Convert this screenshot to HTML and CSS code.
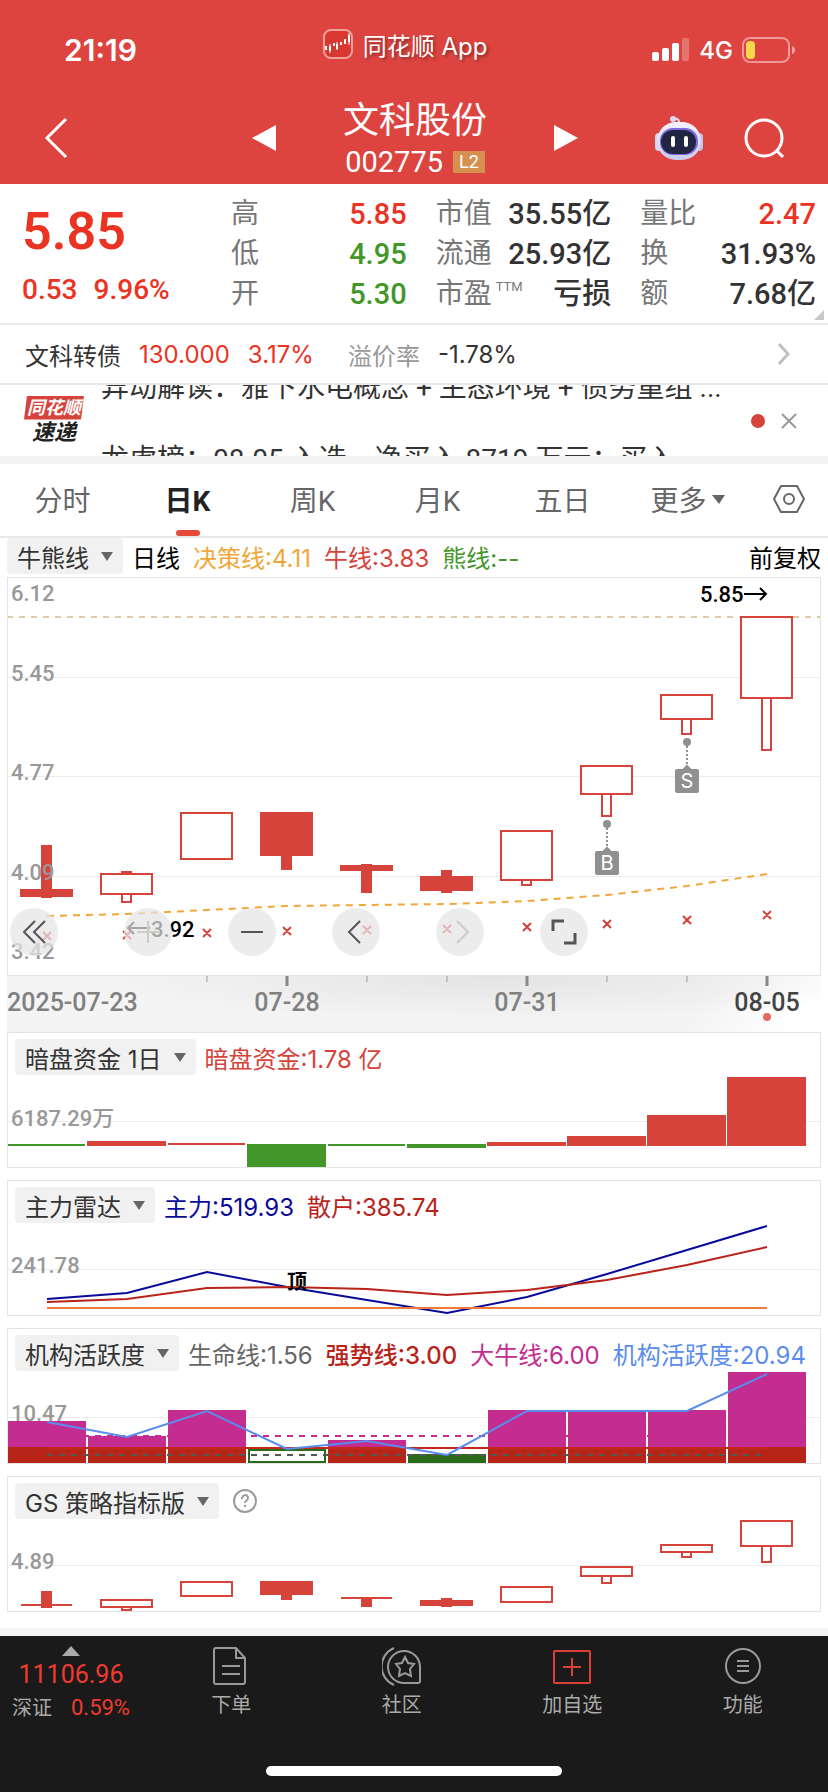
FILE: index.html
```html
<!DOCTYPE html>
<html lang="zh-CN">
<head>
  <meta charset="UTF-8">
  <meta name="viewport" content="width=device-width, initial-scale=1">
  <title>文科股份 002775</title>
  <link rel="stylesheet" href="styles.css">
</head>
<body>

  <header class="top">
    <div class="status">
      <span class="clock">21:19</span>
      <span class="app">
        <svg width="30" height="30" viewBox="0 0 30 30">
          <rect x="1" y="1" width="28" height="28" rx="7" fill="#d8382f" stroke="#f0a09c" stroke-width="2"/>
          <path d="M3 17v4M7 17v5M11 14v3M14 15v5M18 13v3M22 10v5M26 6v7" stroke="#fff" stroke-width="2" fill="none"/>
          <path d="M7 15v9M14 13v8M26 4v12" stroke="#fff" stroke-width="1" fill="none"/>
        </svg>
        同花顺 App
      </span>
      <span class="signals">
        <svg width="38" height="24" viewBox="0 0 38 24" fill="#fff">
          <rect x="0" y="14" width="7" height="9" rx="2"/>
          <rect x="10" y="10" width="7" height="13" rx="2"/>
          <rect x="20" y="5" width="7" height="18" rx="2"/>
          <rect x="30" y="0" width="7" height="23" rx="2" opacity=".25"/>
        </svg>
        4G
        <svg width="54" height="26" viewBox="0 0 54 26">
          <rect x="1" y="1" width="46" height="24" rx="7" fill="none" stroke="#fff" stroke-opacity=".45" stroke-width="2"/>
          <rect x="4" y="4" width="9" height="18" rx="4" fill="#f8d74a"/>
          <path d="M50 9q3 1 3 4t-3 4z" fill="#fff" opacity=".5"/>
        </svg>
      </span>
    </div>

    <div class="nav">
      <button class="icon-btn" aria-label="返回">
        <svg width="24" height="42" viewBox="0 0 24 42" fill="none" stroke="#fff" stroke-width="3"><path d="M22 2L3 21l19 19"/></svg>
      </button>
      <div class="switcher">
        <button class="icon-btn" aria-label="上一只">
          <svg width="24" height="26" viewBox="0 0 24 26" fill="#fff"><path d="M24 0v26L0 13z"/></svg>
        </button>
        <div class="title">
          <h1>文科股份</h1>
          <p>002775 <span class="level">L2</span></p>
        </div>
        <button class="icon-btn" aria-label="下一只">
          <svg width="24" height="26" viewBox="0 0 24 26" fill="#fff"><path d="M0 0v26l24-13z"/></svg>
        </button>
      </div>
      <div class="tools">
        <button class="icon-btn" aria-label="智能助手">
          <svg width="50" height="46" viewBox="0 0 50 46">
            <defs>
              <linearGradient id="shell" x1="0" y1="0" x2="0" y2="1">
                <stop offset="0" stop-color="#f4f2fd"/><stop offset="1" stop-color="#c9cbea"/>
              </linearGradient>
            </defs>
            <path d="M25 9c1-4-1-5-5-6" fill="none" stroke="#e6e3f8" stroke-width="2"/>
            <circle cx="19" cy="4" r="3" fill="#dcd8f4"/>
            <rect x="1" y="18" width="8" height="18" rx="4" fill="#d5d6f0"/>
            <rect x="41" y="18" width="8" height="18" rx="4" fill="#bfc4ec"/>
            <rect x="3" y="7" width="44" height="38" rx="19" fill="url(#shell)"/>
            <rect x="6" y="13" width="38" height="27" rx="13" fill="#7d68dc"/>
            <rect x="7" y="15" width="35" height="24" rx="12" fill="#1f2542"/>
            <rect x="17" y="21" width="4" height="11" rx="2" fill="#fff"/>
            <rect x="30" y="21" width="4" height="11" rx="2" fill="#fff"/>
          </svg>
        </button>
        <button class="icon-btn" aria-label="搜索">
          <svg width="42" height="42" viewBox="0 0 42 42" fill="none" stroke="#fff" stroke-width="3"><circle cx="20" cy="21" r="18"/><path d="M33 34l6 6"/></svg>
        </button>
      </div>
    </div>
  </header>

  <section class="quote">
    <div class="price">
      <strong>5.85</strong>
      <p><span>0.53</span><span>9.96%</span></p>
    </div>
    <dl>
      <div><dt>高</dt><dd class="up">5.85</dd></div>
      <div><dt>低</dt><dd class="down">4.95</dd></div>
      <div><dt>开</dt><dd class="down">5.30</dd></div>
    </dl>
    <dl>
      <div><dt>市值</dt><dd>35.55亿</dd></div>
      <div><dt>流通</dt><dd>25.93亿</dd></div>
      <div><dt>市盈<sup>TTM</sup></dt><dd>亏损</dd></div>
    </dl>
    <dl>
      <div><dt>量比</dt><dd class="up">2.47</dd></div>
      <div><dt>换</dt><dd>31.93%</dd></div>
      <div><dt>额</dt><dd>7.68亿</dd></div>
    </dl>
    <svg class="corner" width="10" height="10" viewBox="0 0 10 10" fill="#c8c8c8"><path d="M10 0v10H0z"/></svg>
  </section>

  <a class="bond" href="#bond">
    <span>文科转债</span>
    <span class="up">130.000</span>
    <span class="up">3.17%</span>
    <span class="muted">溢价率</span>
    <span>-1.78%</span>
    <svg width="14" height="22" viewBox="0 0 14 22" fill="none" stroke="#c0c0c0" stroke-width="3"><path d="M2 1l9 10-9 10"/></svg>
  </a>

  <section class="news">
    <div class="news-logo"><b>同花顺</b><i>速递</i></div>
    <ul>
      <li>异动解读：雅下水电概念 + 生态环境 + 债务重组 ...</li>
      <li>龙虎榜：08-05 入选，净买入 8719 万元；买入</li>
    </ul>
    <span class="dot"></span>
    <button class="icon-btn" aria-label="关闭">
      <svg width="16" height="16" viewBox="0 0 16 16" fill="none" stroke="#999" stroke-width="2"><path d="M1 1l14 14M15 1L1 15"/></svg>
    </button>
  </section>

  <nav class="tabs">
    <button>分时</button>
    <button class="active">日K</button>
    <button>周K</button>
    <button>月K</button>
    <button>五日</button>
    <button>更多<svg width="13" height="9" viewBox="0 0 13 9" fill="#666"><path d="M0 0h13L7 9z"/></svg></button>
    <button aria-label="设置">
      <svg width="34" height="30" viewBox="0 0 34 30" fill="none" stroke="#666" stroke-width="2"><path d="M9 2h16l7 13-7 13H9L2 15z" stroke-linejoin="round"/><circle cx="17" cy="15" r="5"/></svg>
    </button>
  </nav>

  <main class="charts">
    <div class="legend">
      <button class="chip">牛熊线<svg width="12" height="9" viewBox="0 0 12 9"><path d="M0 0h12L6 9z"/></svg></button>
      <span class="black">日线</span>
      <span class="orange">决策线:4.11</span>
      <span class="red">牛线:3.83</span>
      <span class="green">熊线:--</span>
      <span class="black adjust">前复权</span>
    </div>

    <div class="kline">
      <svg class="plot" viewBox="0 0 814 399">
        <g class="grid"><path d="M0 100h814M0 199h814M0 299h814"/></g>

        <!-- candles -->
        <g class="solid">
          <path d="M13 312h53v8H13zM34 268h11v53H34z"/>
          <path d="M253 235h53v44h-53zM274 279h11v14h-11z"/>
          <path d="M333 288h53v6h-53zM354 287h11v29h-11z"/>
          <path d="M413 299h53v15h-53zM434 293h11v23h-11z"/>
        </g>
        <g class="hollow">
          <path d="M94 297h51v20H94zM115 295h9v2h-9zM115 317h9v8h-9z"/>
          <path d="M174 236h51v46h-51z"/>
          <path d="M494 254h51v49h-51zM515 303h9v5h-9z"/>
          <path d="M574 189h51v28h-51zM595 217h9v22h-9z"/>
          <path d="M654 118h51v24h-51zM675 142h9v15h-9z"/>
          <path d="M734 40h51v81h-51zM755 121h9v52h-9z"/>
        </g>
        <path d="M0 40h733M786 40h28" stroke="#e0c9a6" stroke-width="2" stroke-dasharray="6 6"/>

        <!-- decision line -->
        <polyline points="40,339 120,337 200,333 280,329 360,328 440,327 520,324 600,318 680,309 760,297" fill="none" stroke="#f0a73a" stroke-width="2" stroke-dasharray="7 6"/>
        <g class="marks">
          <path d="M36 355l8 8m0-8l-8 8M116 354l8 8m0-8l-8 8M196 352l8 8m0-8l-8 8M276 350l8 8m0-8l-8 8M356 349l8 8m0-8l-8 8"/>
          <path d="M436 348l8 8m0-8l-8 8M516 346l8 8m0-8l-8 8M596 343l8 8m0-8l-8 8M676 339l8 8m0-8l-8 8M756 334l8 8m0-8l-8 8"/>
        </g>

        <!-- trade points -->
        <g class="point">
          <circle cx="600" cy="247" r="4"/><path d="M600 251v20" stroke-dasharray="2 2"/>
          <path d="M596 275l4-4 4 4z"/><rect x="588" y="274" width="24" height="24" rx="2"/>
          <text x="600" y="293">B</text>
          <circle cx="680" cy="165" r="4"/><path d="M680 169v20" stroke-dasharray="2 2"/>
          <path d="M676 193l4-4 4 4z"/><rect x="668" y="192" width="24" height="24" rx="2"/>
          <text x="680" y="211">S</text>
        </g>

        <g class="scale">
          <text x="4" y="24">6.12</text>
          <text x="4" y="104">5.45</text>
          <text x="4" y="203">4.77</text>
          <text x="4" y="303">4.09</text>
          <text x="4" y="382">3.42</text>
        </g>
        <g class="extreme">
          <text x="693" y="25">5.85</text>
          <path d="M737 17h22M753 11l6 6-6 6"/>
          <text x="144" y="360">3.92</text>
          <path d="M143 351h-22M127 345l-6 6 6 6"/>
        </g>
      </svg>

      <div class="controls">
        <button aria-label="最早"><svg width="24" height="24" viewBox="0 0 24 24"><path d="M13 1L2 12l11 11M23 1L12 12l11 11"/></svg></button>
        <button aria-label="放大" disabled><svg width="24" height="24" viewBox="0 0 24 24"><path d="M1 12h22M12 1v22"/></svg></button>
        <button aria-label="缩小"><svg width="24" height="24" viewBox="0 0 24 24"><path d="M1 12h22"/></svg></button>
        <button aria-label="左移"><svg width="24" height="24" viewBox="0 0 24 24"><path d="M16 1L5 12l11 11"/></svg></button>
        <button aria-label="右移" disabled><svg width="24" height="24" viewBox="0 0 24 24"><path d="M9 1l11 11L9 23"/></svg></button>
        <button aria-label="全屏"><svg width="26" height="26" viewBox="0 0 26 26" class="corners"><path d="M2 12V2h11M24 14v10H13"/></svg></button>
      </div>
    </div>

    <svg class="dates" viewBox="0 0 814 56">
      <path d="M200 0v6M360 0v6M440 0v6M600 0v6M680 0v6" stroke="#999" stroke-width="1"/>
      <path d="M280 0v10M520 0v10M760 0v10" stroke="#888" stroke-width="3"/>
      <text x="0" y="35">2025-07-23</text>
      <text x="280" y="35" class="mid">07-28</text>
      <text x="520" y="35" class="mid">07-31</text>
      <text x="760" y="35" class="mid now">08-05</text>
      <circle cx="760" cy="41" r="4" fill="#e46962"/>
    </svg>

    <section class="panel">
      <div class="legend">
        <button class="chip">暗盘资金 1日<svg width="12" height="9" viewBox="0 0 12 9"><path d="M0 0h12L6 9z"/></svg></button>
        <span class="red">暗盘资金:1.78 亿</span>
      </div>
      <svg class="plot" viewBox="0 0 814 136">
        <g class="grid"><path d="M0 89h814"/></g>
        <path d="M0 112h78v2H0zM240 112h79v23h-79zM321 112h77v2h-77zM400 112h79v4h-79z" fill="#43962a"/>
        <path d="M80 109h79v5H80zM161 111h77v2h-77zM480 110h79v4h-79zM560 104h79v10h-79zM640 83h79v31h-79zM720 45h79v69h-79z" fill="#d6433b"/>
        <g class="scale"><text x="4" y="94">6187.29万</text></g>
      </svg>
    </section>

    <section class="panel">
      <div class="legend">
        <button class="chip">主力雷达<svg width="12" height="9" viewBox="0 0 12 9"><path d="M0 0h12L6 9z"/></svg></button>
        <span class="navy">主力:519.93</span>
        <span class="crimson">散户:385.74</span>
      </div>
      <svg class="plot" viewBox="0 0 814 136">
        <g class="grid"><path d="M0 89h814"/></g>
        <g fill="none" stroke-width="2">
          <polyline points="40,119 120,113 200,92 280,107 360,120 440,133 520,117 600,94 680,70 760,46" stroke="#0a0a9a"/>
          <polyline points="40,122 120,119 200,108 280,107 360,109 440,115 520,110 600,100 680,85 760,67" stroke="#b8231a"/>
          <path d="M40 128h720" stroke="#ee7a3c"/>
        </g>
        <g class="scale"><text x="4" y="93">241.78</text></g>
        <text x="280" y="109" class="tag">顶</text>
      </svg>
    </section>

    <section class="panel">
      <div class="legend">
        <button class="chip">机构活跃度<svg width="12" height="9" viewBox="0 0 12 9"><path d="M0 0h12L6 9z"/></svg></button>
        <span class="gray">生命线:1.56</span>
        <span class="crimson strong">强势线:3.00</span>
        <span class="magenta">大牛线:6.00</span>
        <span class="blue">机构活跃度:20.94</span>
      </div>
      <svg class="plot" viewBox="0 0 814 136">
        <g class="grid"><path d="M0 89h814"/></g>
        <g class="scale"><text x="4" y="93">10.47</text></g>
        <path d="M0 93h79v26H0zM81 108h78v11H81zM161 82h78v37h-78zM321 112h78v7h-78zM481 82h78v37h-78zM561 82h78v37h-78zM641 82h78v37h-78zM721 44h78v75h-78z" fill="#c42c90"/>
        <path d="M0 119h79v16H0zM81 119h78v16H81zM161 119h78v16h-78zM321 119h78v16h-78zM481 119h78v16h-78zM561 119h78v16h-78zM641 119h78v16h-78zM721 119h78v16h-78z" fill="#b72519"/>
        <path d="M242 122h76v12h-76z" fill="#fff" stroke="#2a6a18" stroke-width="2"/>
        <path d="M401 126h78v9h-78z" fill="#2a6a18"/>
        <path d="M76 108h684" stroke="#c42c90" stroke-width="2" stroke-dasharray="6 6"/>
        <path d="M40 120h720" stroke="#c4281c" stroke-width="2"/>
        <path d="M40 127h720" stroke="#555" stroke-width="2" stroke-dasharray="6 6"/>
        <polyline points="40,94 120,109 200,83 280,121 360,113 440,127 520,83 600,83 680,83 760,46" fill="none" stroke="#5a8cec" stroke-width="2"/>
      </svg>
    </section>

    <section class="panel">
      <div class="legend">
        <button class="chip">GS 策略指标版<svg width="12" height="9" viewBox="0 0 12 9"><path d="M0 0h12L6 9z"/></svg></button>
        <button class="icon-btn help" aria-label="指标说明">
          <svg width="24" height="24" viewBox="0 0 24 24" fill="none" stroke="#999" stroke-width="2"><circle cx="12" cy="12" r="11"/><path d="M9 10c0-5 6-5 6-1 0 3-3 2-3 5M12 16v2"/></svg>
        </button>
      </div>
      <svg class="plot" viewBox="0 0 814 136">
        <g class="grid"><path d="M0 89h814"/></g>
        <g class="solid">
          <path d="M14 128h51v2H14zM34 115h11v17H34z"/>
          <path d="M253 105h53v14h-53zM274 119h11v5h-11z"/>
          <path d="M334 121h51v2h-51zM354 121h11v10h-11z"/>
          <path d="M413 124h53v6h-53zM434 122h11v9h-11z"/>
        </g>
        <g class="hollow">
          <path d="M94 124h51v7H94zM115 131h9v3h-9z"/>
          <path d="M174 106h51v14h-51z"/>
          <path d="M494 111h51v15h-51z"/>
          <path d="M574 91h51v9h-51zM595 100h9v7h-9z"/>
          <path d="M654 69h51v7h-51zM675 76h9v5h-9z"/>
          <path d="M734 45h51v25h-51zM755 70h9v16h-9z"/>
        </g>
        <g class="scale"><text x="4" y="93">4.89</text></g>
      </svg>
    </section>
  </main>

  <footer class="bottom">
    <div class="bar">
      <a class="index" href="#index">
        <svg width="18" height="10" viewBox="0 0 18 10"><path d="M0 10L9 0l9 10z"/></svg>
        <strong>11106.96</strong>
        <span>深证 <b>0.59%</b></span>
      </a>
      <a href="#order">
        <svg width="40" height="40" viewBox="0 0 40 40"><path d="M5 2h20l9 10v24a2 2 0 0 1-2 2H5a2 2 0 0 1-2-2V4a2 2 0 0 1 2-2zM25 2v10h9M11 20h18M11 28h18"/></svg>
        下单
      </a>
      <a href="#community">
        <svg width="40" height="40" viewBox="0 0 40 40"><path d="M23 37h13a2 2 0 0 0 2-2V20A16 16 0 1 0 23 37zM12 2a20 20 0 0 0 0 37M23 11l3 6 6 1-4 5 1 7-6-3-6 3 1-7-4-5 6-1z"/></svg>
        社区
      </a>
      <a href="#watch">
        <svg class="add" width="40" height="40" viewBox="0 0 40 40"><rect x="2" y="5" width="36" height="32" rx="1"/><path d="M20 12v18M11 21h18"/></svg>
        加自选
      </a>
      <a href="#more">
        <svg width="40" height="40" viewBox="0 0 40 40"><circle cx="20" cy="20" r="17"/><path d="M14 15h12M14 20h12M14 25h12"/></svg>
        功能
      </a>
    </div>
    <div class="home"></div>
  </footer>

</body>
</html>
```

FILE: styles.css
```css
:root {
  --head: #dd4440;
  --up: #eb3323;
  --down: #43962a;
  --candle: #d6433b;
  --text: #333;
  --line: #e8e8e8;
  --num: Roboto, "Noto Sans CJK SC", sans-serif;
  --ui: Inter, "Noto Sans CJK SC", sans-serif;
}

* {
  box-sizing: border-box;
}

body {
  margin: 0;
  background: #fff;
  color: var(--text);
  font-family: var(--num);
  font-size: 24px;
}

h1, p, dl, dd, ul {
  margin: 0;
  padding: 0;
}

button {
  border: none;
  background: none;
  padding: 0;
  font: inherit;
  color: inherit;
}

a {
  color: inherit;
  text-decoration: none;
}

svg {
  display: block;
  flex: none;
}

.up { color: var(--up); }
.down { color: var(--down); }
.muted { color: #999; }
.black { color: #000; }
.orange { color: #f0a73a; }
.red { color: var(--candle); }
.green { color: var(--down); }
.navy { color: #0a0a9a; }
.crimson { color: #b8231a; }
.gray { color: #666; }
.magenta { color: #c42c90; }
.blue { color: #5a8cec; }
.strong { font-weight: 500; }

/* header */
.top {
  background: var(--head);
  color: #fff;
  font-family: var(--ui);
}

.status {
  display: grid;
  grid-template-columns: 1fr auto 1fr;
  align-items: center;
  height: 92px;
  padding: 8px 32px 0 64px;
}

.clock {
  font-size: 30px;
  font-weight: 600;
}

.app {
  display: flex;
  align-items: center;
  gap: 10px;
  padding: 0 50px 12px 0;
  text-shadow: 2px 2px 3px rgba(0,0,0,0.35);
}

.signals {
  display: flex;
  align-items: center;
  justify-content: flex-end;
  gap: 9px;
  font-weight: 500;
}

.nav {
  display: grid;
  grid-template-columns: 1fr auto 1fr;
  align-items: center;
  height: 92px;
  padding: 0 42px 0 44px;
}

.icon-btn {
  display: flex;
  align-items: center;
}

.switcher {
  display: flex;
  align-items: center;
  gap: 67px;
}

.title {
  text-align: center;
}

.title h1 {
  font-size: 36px;
  font-weight: 400;
  line-height: 48px;
}

.title p {
  display: flex;
  justify-content: center;
  align-items: center;
  gap: 10px;
  font-family: var(--num);
  font-size: 29px;
  line-height: 36px;
}

.level {
  padding: 0 6px;
  background: #d69150;
  font-size: 18px;
  line-height: 22px;
}

.tools {
  display: flex;
  align-items: center;
  justify-content: flex-end;
  gap: 40px;
}

/* quote */
.quote {
  position: relative;
  display: grid;
  grid-template-columns: 180px 1fr 1fr 1fr;
  gap: 29px;
  height: 141px;
  padding: 10px 12px 0 22px;
  border-bottom: 2px solid var(--line);
}

.price {
  color: var(--up);
  font-weight: 500;
}

.price strong {
  display: block;
  font-size: 52px;
  font-weight: 600;
  line-height: 76px;
}

.price p {
  display: flex;
  gap: 16px;
  font-size: 28px;
  line-height: 40px;
}

.quote dl div {
  display: flex;
  justify-content: space-between;
  line-height: 40px;
}

.quote dt {
  color: #777;
  font-size: 28px;
}

.quote sup {
  margin-left: 4px;
  font-size: 13px;
  line-height: 0;
  vertical-align: 12px;
}

.quote dd {
  font-size: 29px;
  font-weight: 500;
}

.corner {
  position: absolute;
  right: 4px;
  bottom: 3px;
}

.bond {
  display: flex;
  align-items: center;
  gap: 18px;
  height: 60px;
  padding: 0 37px 0 25px;
  border-bottom: 2px solid var(--line);
  font-family: var(--ui);
}

.bond .muted {
  margin-left: 16px;
}

.bond svg {
  margin-left: auto;
}

/* news ticker */
.news {
  display: flex;
  align-items: center;
  height: 79px;
  padding: 0 31px 0 24px;
  border-bottom: 8px solid #f4f4f4;
  overflow: hidden;
}

.news-logo {
  width: 60px;
  text-align: center;
  font-style: italic;
}

.news-logo b {
  display: block;
  background: var(--candle);
  color: #fff;
  font-size: 18px;
  line-height: 24px;
  clip-path: polygon(3px 0, 100% 0, 57px 100%, 0 100%);
}

.news-logo i {
  display: block;
  color: #222;
  font-size: 22px;
  font-weight: 700;
  line-height: 26px;
}

.news ul {
  flex: 1;
  height: 71px;
  margin-left: 17px;
  overflow: hidden;
  list-style: none;
  font-size: 28px;
  line-height: 72px;
  white-space: nowrap;
}

.news li:first-child {
  margin-top: -33px;
}

.dot {
  width: 14px;
  height: 14px;
  margin-right: 16px;
  border-radius: 50%;
  background: var(--candle);
}

/* period tabs */
.tabs {
  display: grid;
  grid-template-columns: repeat(6, 1fr) 78px;
  height: 74px;
  border-bottom: 2px solid var(--line);
}

.tabs button {
  display: flex;
  align-items: center;
  justify-content: center;
  gap: 5px;
  padding-bottom: 2px;
  color: #666;
  font-size: 28px;
}

.tabs .active {
  position: relative;
  color: #222;
  font-weight: 700;
}

.tabs .active::after {
  content: "";
  position: absolute;
  bottom: 0;
  left: calc(50% - 12px);
  width: 24px;
  height: 6px;
  border-radius: 3px;
  background: #e64a3b;
}

/* charts */
.charts {
  padding: 0 7px 16px;
}

.legend {
  display: flex;
  align-items: center;
  gap: 13px;
  height: 39px;
  padding-bottom: 3px;
  font-family: var(--ui);
  white-space: nowrap;
}

.chip {
  display: flex;
  align-items: center;
  gap: 12px;
  height: 36px;
  margin-right: -4px;
  padding: 0 10px;
  border-radius: 4px;
  background: #f1f1f1;
}

.chip svg {
  fill: #666;
}

.adjust {
  margin-left: auto;
}

.plot {
  width: 100%;
  height: auto;
  outline: 1px solid #e4e4e4;
  outline-offset: -1px;
}

.grid {
  stroke: #ececec;
  stroke-width: 1;
}

.grid path {
  shape-rendering: crispEdges;
}

.scale {
  fill: #999;
  font-size: 22px;
  font-weight: 500;
}

.solid {
  fill: var(--candle);
}

.hollow {
  fill: #fff;
  stroke: var(--candle);
  stroke-width: 2;
}

.marks {
  fill: none;
  stroke: var(--candle);
  stroke-width: 2;
}

.point {
  fill: #909090;
}

.point path {
  stroke: #909090;
  stroke-width: 2;
}

.point text {
  fill: #fff;
  font-family: var(--ui);
  font-size: 20px;
  text-anchor: middle;
}

.extreme {
  font-size: 22px;
  font-weight: 500;
}

.extreme path {
  fill: none;
  stroke: #000;
  stroke-width: 2;
}

.tag {
  font-size: 20px;
  font-weight: 700;
}

.kline {
  position: relative;
}

.controls {
  position: absolute;
  left: 3px;
  bottom: 20px;
  display: flex;
  gap: 56px;
}

.controls button {
  display: flex;
  align-items: center;
  justify-content: center;
  width: 48px;
  height: 48px;
  border-radius: 50%;
  background: rgba(229,229,229,0.72);
}

.controls button:first-child {
  margin-right: 10px;
}

.controls svg {
  fill: none;
  stroke: #555;
  stroke-width: 2;
}

.controls .corners {
  stroke-width: 3;
}

.controls button:disabled svg {
  stroke: #ccc;
}

.dates {
  width: 100%;
  height: auto;
  background: radial-gradient(ellipse 50% 80% at 60% 0, #e4e4e4, rgba(244,244,244,0)), linear-gradient(100deg, #f4f4f4 84%, #fff 97%);
  fill: #808080;
  font-size: 25px;
  font-weight: 500;
}

.dates .mid {
  text-anchor: middle;
}

.dates .now {
  fill: #444;
}

.panel {
  display: grid;
  margin-bottom: 12px;
}

.panel:last-child {
  margin-bottom: 0;
}

.panel .legend,
.panel .plot {
  grid-area: 1 / 1;
}

.panel .legend {
  z-index: 1;
  height: 53px;
  padding-left: 8px;
}

.help {
  margin-left: 5px;
}

/* bottom bar */
.bottom {
  padding-bottom: 16px;
  border-top: 8px solid #f4f4f4;
  background: #1a1a1a;
  color: #aaa;
}

.bar {
  display: grid;
  grid-template-columns: 146px repeat(4, 1fr);
  height: 130px;
  padding-top: 10px;
}

.bar a {
  display: flex;
  flex-direction: column;
  align-items: center;
  gap: 5px;
  font-size: 20px;
  line-height: 28px;
}

.bar svg {
  fill: none;
  stroke: #999;
  stroke-width: 2;
}

.bar .add {
  stroke: #d94136;
}

.bar .index {
  gap: 3px;
  padding-right: 4px;
}

.index svg {
  fill: #aaa;
  stroke: none;
}

.index strong {
  color: #f03a2e;
  font-size: 25px;
  font-weight: 400;
  line-height: 32px;
}

.index b {
  margin-left: 14px;
  color: #f03a2e;
  font-size: 22px;
  font-weight: 400;
}

.home {
  width: 296px;
  height: 10px;
  margin: 0 auto;
  border-radius: 5px;
  background: #fff;
}
```
